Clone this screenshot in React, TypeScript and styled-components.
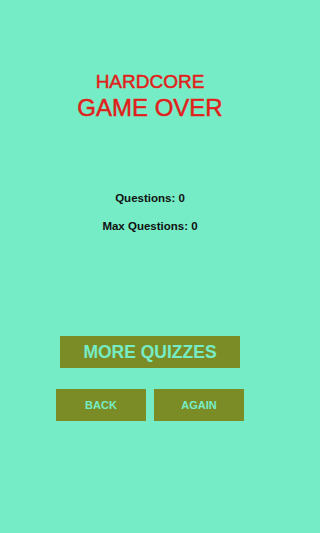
import React from 'react';
import styled, { createGlobalStyle } from 'styled-components';

const mint = '#76ecc6';
const olive = '#7b8c26';
const red = '#e0201a';

const GlobalStyle = createGlobalStyle`
  html, body {
    margin: 0;
    padding: 0;
    background: ${mint};
  }
  body {
    font-family: "Liberation Sans", Arial, sans-serif;
  }
`;

const Page = styled.div`
  width: 300px;
  height: 533px;
  display: flex;
  flex-direction: column;
  align-items: center;
  padding-top: 72px;
  box-sizing: border-box;
  background: ${mint};
`;

const Title = styled.div<{ $size: number; $gap?: number }>`
  color: ${red};
  font-size: ${(p) => p.$size}px;
  line-height: ${(p) => p.$size}px;
  margin-top: ${(p) => p.$gap ?? 0}px;
  text-align: center;
  -webkit-text-stroke: 0.5px ${red};
`;

const Stats = styled.div`
  margin-top: 72px;
  display: flex;
  flex-direction: column;
  align-items: center;
  gap: 16px;
`;

const Stat = styled.div`
  color: #111;
  font-weight: bold;
  font-size: 11.5px;
  line-height: 12px;
`;

const Button = styled.button<{ $width: number; $size: number }>`
  width: ${(p) => p.$width}px;
  height: 32px;
  border: none;
  padding: 0;
  background: ${olive};
  color: ${mint};
  font-family: "Liberation Sans", Arial, sans-serif;
  font-weight: bold;
  font-size: ${(p) => p.$size}px;
  display: flex;
  align-items: center;
  justify-content: center;
`;

const MainButtonWrap = styled.div`
  margin-top: 104px;
`;

const ButtonRow = styled.div`
  margin-top: 21px;
  display: flex;
  gap: 8px;
`;

export default function App() {
  return (
    <>
      <GlobalStyle />
      <Page>
        <Title $size={19}>HARDCORE</Title>
        <Title $size={24} $gap={5}>GAME OVER</Title>
        <Stats>
          <Stat>Questions: 0</Stat>
          <Stat>Max Questions: 0</Stat>
        </Stats>
        <MainButtonWrap>
          <Button $width={180} $size={17.5}>MORE QUIZZES</Button>
        </MainButtonWrap>
        <ButtonRow>
          <Button $width={90} $size={11}>BACK</Button>
          <Button $width={90} $size={11}>AGAIN</Button>
        </ButtonRow>
      </Page>
    </>
  );
}
